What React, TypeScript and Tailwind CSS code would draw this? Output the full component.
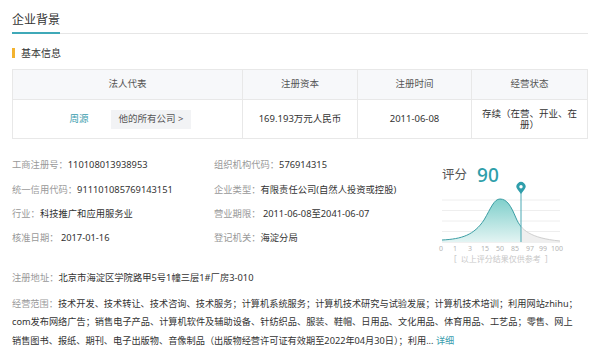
export default function App() {
  return (
    <div className="w-[600px] h-[356px] bg-white overflow-hidden font-['Noto_Sans','Noto_Sans_CJK_SC',sans-serif] text-[#333]">
      <div className="px-[12px]">
        {/* Title */}
        <div className="h-[34px] border-b border-[#e6e6e6] flex items-end">
          <span className="h-[34px] pt-[12px] leading-[16px] text-[12px] text-[#333] border-b-2 border-[#3fa9b8] -mb-px">企业背景</span>
        </div>
        {/* Sub title */}
        <div className="h-[35px] pt-[3px] flex items-center gap-[6px]">
          <span className="w-[3px] h-[10px] bg-[#f3b32f]" />
          <span className="text-[10px] leading-[12px] text-[#333]">基本信息</span>
        </div>
        {/* Table */}
        <div className="border border-[#e8e8e8] text-[9.5px]">
          <div className="grid grid-cols-[230px_115px_114px_1fr] h-[29px] bg-[#f7f8fa] text-[#555]">
            <div className="flex items-center justify-center border-r border-[#e8e8e8]">法人代表</div>
            <div className="flex items-center justify-center border-r border-[#e8e8e8]">注册资本</div>
            <div className="flex items-center justify-center border-r border-[#e8e8e8]">注册时间</div>
            <div className="flex items-center justify-center">经营状态</div>
          </div>
          <div className="grid grid-cols-[230px_115px_114px_1fr] h-[39px] border-t border-[#e8e8e8] text-[#333]">
            <div className="flex items-center justify-center gap-[22px] border-r border-[#e8e8e8]">
              <span className="text-[#3a9dae] pl-[6px]">周源</span>
              <span className="h-[19px] px-[8px] flex items-center bg-[#f2f3f5] text-[#555]">他的所有公司 &gt;</span>
            </div>
            <div className="flex items-center justify-center border-r border-[#e8e8e8]">169.193万元人民币</div>
            <div className="flex items-center justify-center border-r border-[#e8e8e8]">2011-06-08</div>
            <div className="flex items-center justify-center text-center px-[9px] leading-[11.5px]">存续（在营、开业、在册）</div>
          </div>
        </div>
        {/* Info */}
        <div className="mt-[14px] flex text-[9.3px]">
          <div className="grid grid-cols-[202px_202px] auto-rows-[24.4px] content-start">
            <Row label="工商注册号：" value="110108013938953" />
            <Row label="组织机构代码：" value="576914315" />
            <Row label="统一信用代码：" value="911101085769143151" />
            <Row label="企业类型：" value="有限责任公司(自然人投资或控股)" />
            <Row label="行业：" value="科技推广和应用服务业" />
            <Row label="营业期限：" value=" 2011-06-08至2041-06-07" />
            <Row label="核准日期：" value=" 2017-01-16" />
            <Row label="登记机关：" value="海淀分局" />
          </div>
          <div className="ml-[24px] w-[140px] flex flex-col pt-[12px]">
            <div className="h-[20px] flex items-center gap-[10px] pl-[2px]">
              <span className="text-[12.5px] text-[#555]">评分</span>
              <span className="text-[19px] font-medium text-[#2e9ea9] leading-none">90</span>
            </div>
            <Chart />
            <div className="text-[8px] text-[#c8c8c8] leading-[10px] pl-[14px] whitespace-pre">[  以上评分结果仅供参考  ]</div>
          </div>
        </div>
        <div className="mt-[1.5px] h-[25px] flex items-center text-[9.3px] whitespace-nowrap">
          <span className="text-[#999]">注册地址：</span>
          <span>北京市海淀区学院路甲5号1幢三层1#厂房3-010</span>
        </div>
        <div className="mt-[4px] text-[9.2px] leading-[18.7px] whitespace-nowrap">
          <div>
            <span className="text-[#999]">经营范围：</span>
            技术开发、技术转让、技术咨询、技术服务；计算机系统服务；计算机技术研究与试验发展；计算机技术培训；利用网站zhihu；
          </div>
          <div>com发布网络广告；销售电子产品、计算机软件及辅助设备、针纺织品、服装、鞋帽、日用品、文化用品、体育用品、工艺品；零售、网上</div>
          <div>
            销售图书、报纸、期刊、电子出版物、音像制品（出版物经营许可证有效期至2022年04月30日）；利用... <span className="text-[#3a9dae]">详细</span>
          </div>
        </div>
      </div>
    </div>
  );
}

function Row({ label, value }: { label: string; value: string }) {
  return (
    <div className="flex items-center whitespace-pre">
      <span className="text-[#999]">{label}</span>
      <span className="text-[#333]">{value}</span>
    </div>
  );
}

function Chart() {
  const curve = "M4,60 C24,59 36,55 46,40 C53,28 56,19 62,19 C69,19 73,26 78,38 C83,50 92,58 122,61";
  const area = curve + " L122,62 L4,62 Z";
  const labels: [string, number][] = [
    ["0", 3],
    ["1", 17],
    ["3", 32],
    ["15", 47],
    ["50", 62],
    ["85", 77],
    ["97", 92],
    ["99", 105],
    ["100", 119],
  ];
  return (
    <svg width="130" height="74" viewBox="0 0 130 74" className="block -ml-[2px] mt-[-5px]">
      <defs>
        <linearGradient id="tealg" x1="0" y1="0" x2="0" y2="1">
          <stop offset="0" stopColor="#7fcfcb" />
          <stop offset="1" stopColor="#e3f4f3" />
        </linearGradient>
        <clipPath id="leftc">
          <rect x="0" y="0" width="83" height="74" />
        </clipPath>
        <clipPath id="rightc">
          <rect x="83" y="0" width="50" height="74" />
        </clipPath>
      </defs>
      {[20, 30.5, 41, 51.5].map((y) => (
        <line key={y} x1="4" x2="122" y1={y} y2={y} stroke="#eeeeee" strokeWidth="1" />
      ))}
      <line x1="4" x2="122" y1="62" y2="62" stroke="#e2e2e2" strokeWidth="1" />
      <path d={area} fill="url(#tealg)" clipPath="url(#leftc)" />
      <path d={area} fill="#efefef" clipPath="url(#rightc)" />
      <path d={curve} fill="none" stroke="#3c9ea4" strokeWidth="1" clipPath="url(#leftc)" />
      <path d={curve} fill="none" stroke="#cfcfcf" strokeWidth="1" clipPath="url(#rightc)" />
      <line x1="83" x2="83" y1="11" y2="62" stroke="#4aa8b3" strokeWidth="1" />
      <path d="M83,14 L79.6,9.5 A4.5,4.5 0 1 1 86.4,9.5 Z" fill="#2f9eab" />
      <circle cx="83" cy="6.8" r="1.7" fill="#ffffff" />
      {labels.map(([t, x]) => (
        <text key={t} x={x} y="70.5" fontSize="7" fill="#b5b5b5" textAnchor="middle" fontFamily="Noto Sans, sans-serif">
          {t}
        </text>
      ))}
    </svg>
  );
}
